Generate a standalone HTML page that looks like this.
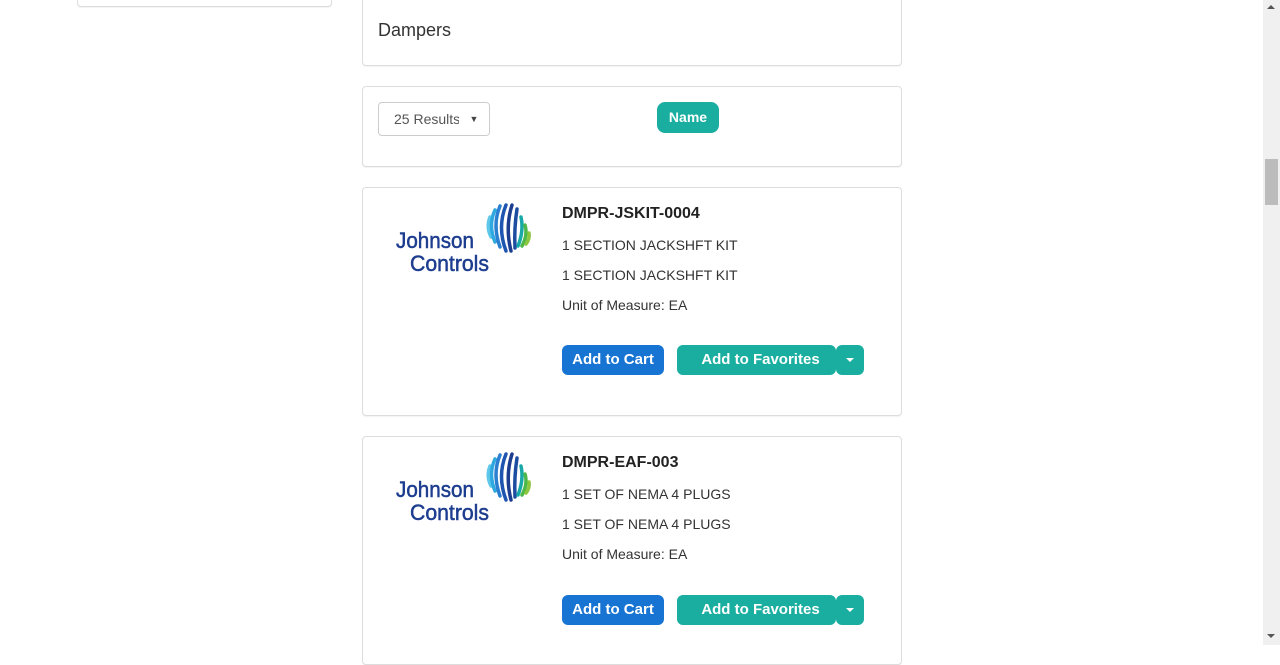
<!DOCTYPE html>
<html><head><meta charset="utf-8"><style>
*{box-sizing:border-box;margin:0;padding:0}
body{width:1280px;height:645px;overflow:hidden;background:#fff;font-family:"Liberation Sans",Arial,sans-serif;color:#333;position:relative}
.box{position:absolute;border:1px solid #ddd;border-radius:4px;background:#fff;box-shadow:0 1px 1px rgba(0,0,0,.05)}
.abs{position:absolute;white-space:nowrap}
.btn{position:absolute;height:30px;border-radius:6px;color:#fff;font-weight:bold;font-size:15px;line-height:30px;text-align:center;font-family:"Liberation Sans",sans-serif}
.blue{background:#1874d2}
.teal{background:#1aaea0}
.sb{position:absolute;left:1263px;top:0;width:17px;height:645px;background:#f0f0f0}
.car{display:inline-block;width:0;height:0;border-left:4px solid transparent;border-right:4px solid transparent;border-top:4px solid #fff;vertical-align:middle}
</style></head><body>
<div class="box" style="left:77px;top:-10px;width:255px;height:17px"></div>
<div class="box" style="left:362px;top:-10px;width:540px;height:76px"></div>
<div class="abs" style="left:378px;top:20px;font-size:18px;color:#333">Dampers</div>

<div class="box" style="left:362px;top:86px;width:540px;height:81px"></div>
<div class="abs" style="left:378px;top:102px;width:112px;height:34px;border:1px solid #ccc;border-radius:4px;font-size:14px;color:#555;line-height:32px;padding-left:15px;overflow:hidden">25 Results<span style="position:absolute;right:0;top:0;width:30px;height:32px;background:#fff;font-size:9px;text-align:center;color:#444">▼</span></div>
<div class="btn teal" style="left:657px;top:102px;width:62px;height:31px;font-size:14px;line-height:31px;border-radius:8px">Name</div>

<div class="box" style="left:362px;top:187px;width:540px;height:229px"></div>
<div class="box" style="left:362px;top:436px;width:540px;height:229px"></div>

<svg class="abs" style="left:380px;top:195px" width="160" height="90" viewBox="0 0 160 90">
<g font-family="Liberation Sans,sans-serif" font-size="22" fill="#1d3d8f" stroke="#1d3d8f" stroke-width="0.5">
<text x="16" y="53" textLength="78" lengthAdjust="spacingAndGlyphs">Johnson</text>
<text x="30" y="76" textLength="79" lengthAdjust="spacingAndGlyphs">Controls</text></g>
<g fill="none" stroke-width="3.5" stroke-linecap="round">
<path d="M110 22 Q106 32 111 42" stroke="#5fc8ea"/>
<path d="M115 15 Q108 30 115 47" stroke="#2fa8e0"/>
<path d="M120 11 Q112 30 120 52" stroke="#2a7fd0"/>
<path d="M126 10 Q117 32 126 56" stroke="#1d55b0"/>
<path d="M132 10 Q125 32 131 56" stroke="#1d3d8f"/>
<path d="M137 14 Q134 33 135 53" stroke="#1d4da0"/>
<path d="M141 22 Q144 36 138 51" stroke="#18a8a8"/>
<path d="M145 30 Q148 40 142 51" stroke="#4cb84a"/>
<path d="M149 38 Q150 44 146 49" stroke="#8cc63f"/>
</g></svg>
<svg class="abs" style="left:380px;top:444px" width="160" height="90" viewBox="0 0 160 90">
<g font-family="Liberation Sans,sans-serif" font-size="22" fill="#1d3d8f" stroke="#1d3d8f" stroke-width="0.5">
<text x="16" y="53" textLength="78" lengthAdjust="spacingAndGlyphs">Johnson</text>
<text x="30" y="76" textLength="79" lengthAdjust="spacingAndGlyphs">Controls</text></g>
<g fill="none" stroke-width="3.5" stroke-linecap="round">
<path d="M110 22 Q106 32 111 42" stroke="#5fc8ea"/>
<path d="M115 15 Q108 30 115 47" stroke="#2fa8e0"/>
<path d="M120 11 Q112 30 120 52" stroke="#2a7fd0"/>
<path d="M126 10 Q117 32 126 56" stroke="#1d55b0"/>
<path d="M132 10 Q125 32 131 56" stroke="#1d3d8f"/>
<path d="M137 14 Q134 33 135 53" stroke="#1d4da0"/>
<path d="M141 22 Q144 36 138 51" stroke="#18a8a8"/>
<path d="M145 30 Q148 40 142 51" stroke="#4cb84a"/>
<path d="M149 38 Q150 44 146 49" stroke="#8cc63f"/>
</g></svg>

<div class="abs" style="left:562px;top:205px;font-size:16px;font-weight:bold;color:#222">DMPR-JSKIT-0004</div>
<div class="abs" style="left:562px;top:237px;font-size:14px">1 SECTION JACKSHFT KIT</div>
<div class="abs" style="left:562px;top:267px;font-size:14px">1 SECTION JACKSHFT KIT</div>
<div class="abs" style="left:562px;top:297px;font-size:14px">Unit of Measure: EA</div>
<div class="btn blue" style="left:562px;top:345px;width:102px">Add to Cart</div>
<div class="btn teal" style="left:677px;top:345px;width:159px;padding-left:8px">Add to Favorites</div>
<div class="btn teal" style="left:836px;top:345px;width:28px"><span class="car"></span></div>

<div class="abs" style="left:562px;top:454px;font-size:16px;font-weight:bold;color:#222">DMPR-EAF-003</div>
<div class="abs" style="left:562px;top:486px;font-size:14px">1 SET OF NEMA 4 PLUGS</div>
<div class="abs" style="left:562px;top:516px;font-size:14px">1 SET OF NEMA 4 PLUGS</div>
<div class="abs" style="left:562px;top:546px;font-size:14px">Unit of Measure: EA</div>
<div class="btn blue" style="left:562px;top:595px;width:102px">Add to Cart</div>
<div class="btn teal" style="left:677px;top:595px;width:159px;padding-left:8px">Add to Favorites</div>
<div class="btn teal" style="left:836px;top:595px;width:28px"><span class="car"></span></div>

<div class="sb">
<div style="position:absolute;left:4px;top:5px;width:0;height:0;border-left:4px solid transparent;border-right:4px solid transparent;border-bottom:4px solid #555"></div>
<div style="position:absolute;left:2px;top:159px;width:13px;height:46px;background:#bcbcbc"></div>
<div style="position:absolute;left:4px;top:634px;width:0;height:0;border-left:4px solid transparent;border-right:4px solid transparent;border-top:4px solid #555"></div>
</div>
</body></html>
